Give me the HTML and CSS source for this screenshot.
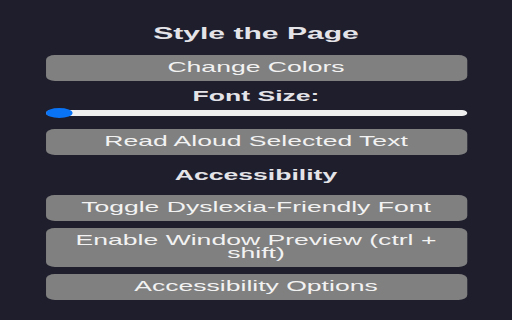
FILE: index.html
```html
<!DOCTYPE html>
<html lang="en">
<head>
<meta charset="utf-8">
<title>Style the Page</title>
<link rel="stylesheet" href="styles.css">
</head>
<body>
<main class="popup">
  <h2 class="title">Style the Page</h2>
  <button class="btn">Change Colors</button>
  <label class="label" for="fs">Font Size:</label>
  <input class="slider" id="fs" type="range" min="12" max="32" value="12">
  <button class="btn">Read Aloud Selected Text</button>
  <h3 class="section">Accessibility</h3>
  <button class="btn">Toggle Dyslexia-Friendly Font</button>
  <button class="btn">Enable Window Preview (ctrl + shift)</button>
  <button class="btn">Accessibility Options</button>
</main>
</body>
</html>
```

FILE: styles.css
```css
html, body {
  margin: 0;
  padding: 0;
  background: #1e1e2d;
  overflow: hidden;
}

.popup {
  width: 289.27px;
  height: 320px;
  box-sizing: border-box;
  padding: 24px 25.5px 0;
  display: flex;
  flex-direction: column;
  align-items: stretch;
  transform: scaleX(1.77);
  transform-origin: 0 0;
  font-family: "Liberation Sans", Arial, sans-serif;
  color: #e4e4e8;
}

.title {
  margin: 0 0 11px;
  font-size: 17px;
  line-height: 20px;
  font-weight: bold;
  text-align: center;
}

.section {
  margin: 4px 0 11px;
  font-size: 15px;
  line-height: 18px;
  font-weight: bold;
  text-align: center;
}

.label {
  display: block;
  margin: -1px 0 0;
  font-size: 15px;
  line-height: 18px;
  font-weight: bold;
  text-align: center;
}

.btn {
  display: block;
  width: 100%;
  margin: 0 0 7px;
  padding: 6px 8px 7.5px;
  border: none;
  border-radius: 5px;
  background: #808080;
  color: #f2f2f2;
  font-family: "Liberation Sans", Arial, sans-serif;
  font-size: 15px;
  line-height: 12.5px;
  text-align: center;
}

.slider {
  -webkit-appearance: none;
  appearance: none;
  display: block;
  width: 100%;
  height: 10px;
  margin: 3px 0 11px;
  padding: 0;
  background: transparent;
}

.slider::-webkit-slider-runnable-track {
  height: 6px;
  border-radius: 3px;
  background: #efefef;
}

.slider::-webkit-slider-thumb {
  -webkit-appearance: none;
  appearance: none;
  width: 15.3px;
  height: 10px;
  margin-top: -2px;
  border-radius: 50%;
  background: #0a74f7;
  border: none;
}
```
